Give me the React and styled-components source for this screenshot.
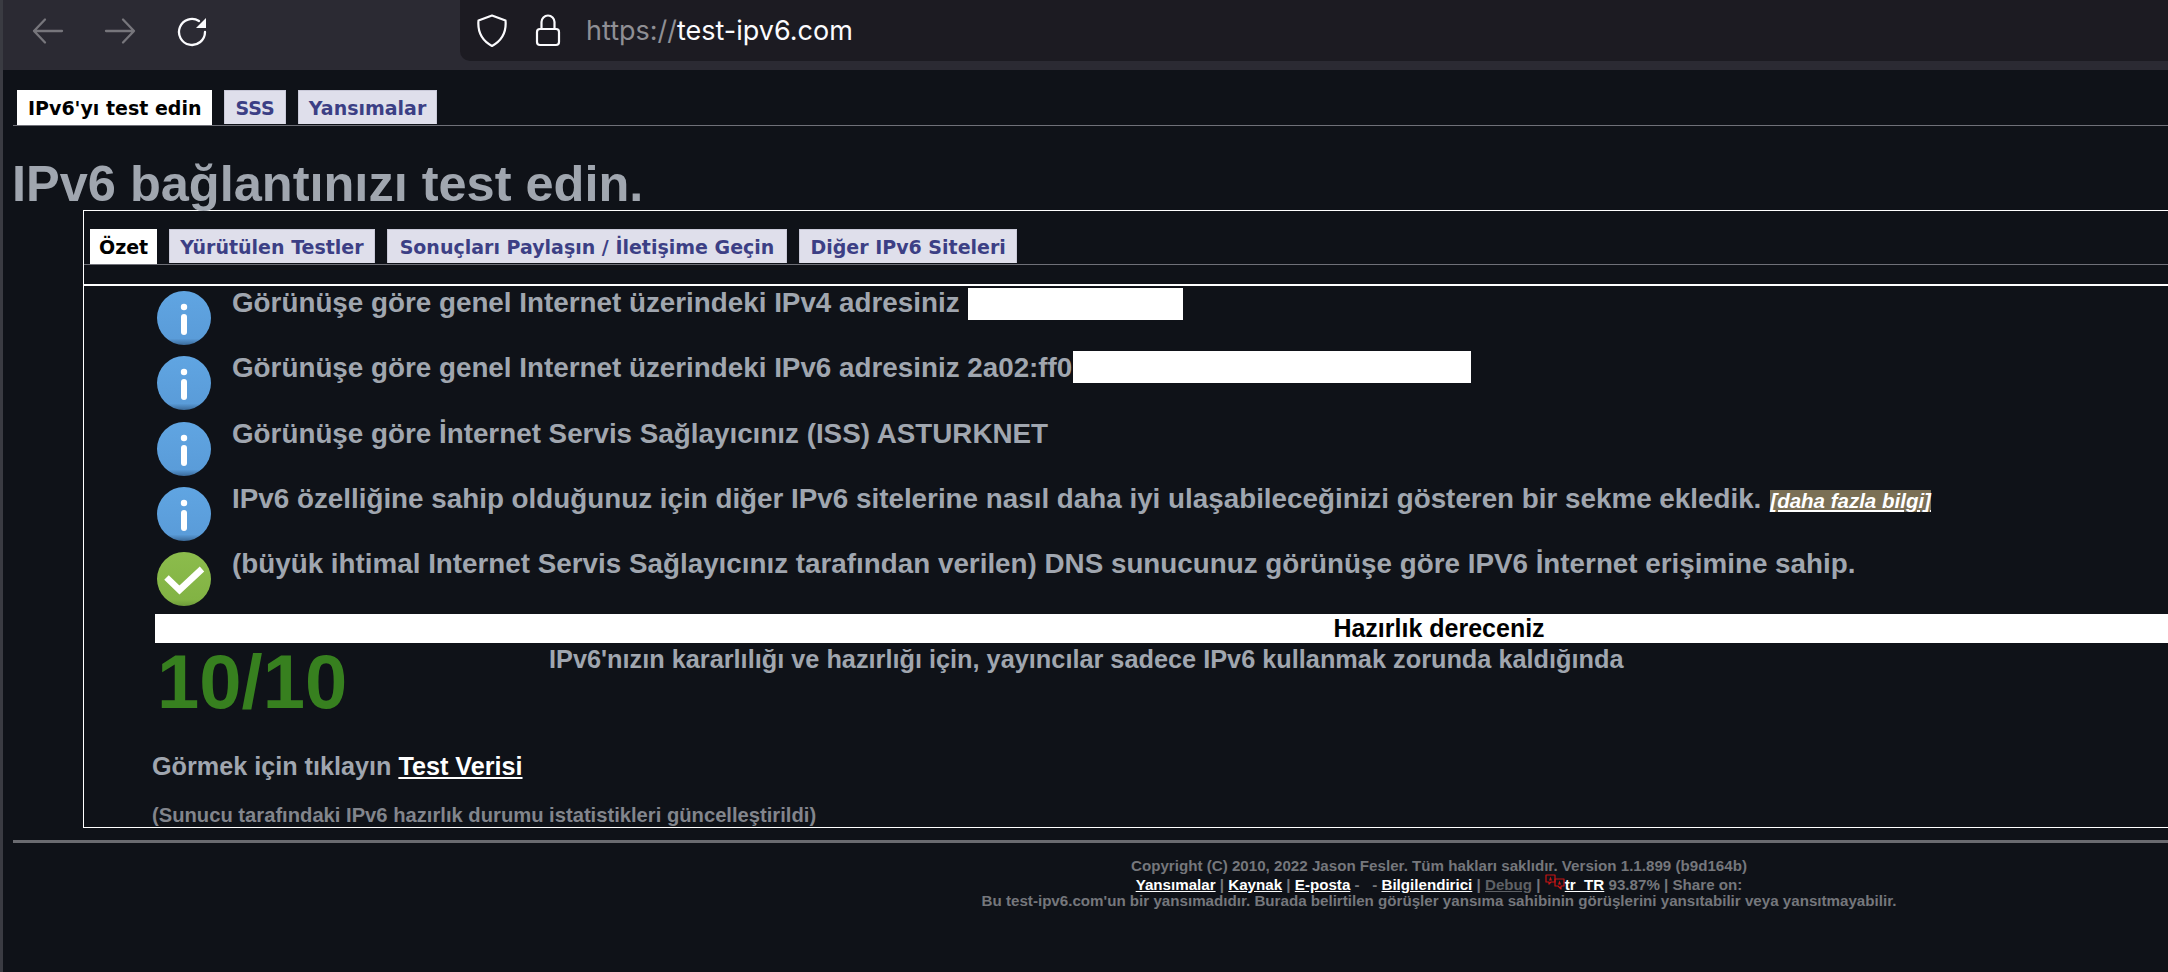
import styled, { createGlobalStyle } from "styled-components";

const GlobalStyle = createGlobalStyle`
  html, body {
    margin: 0;
    padding: 0;
    background: #0f1218;
    overflow: hidden;
  }
`;

const Window = styled.div`
  width: 2168px;
  height: 972px;
  overflow: hidden;
  background: #0f1218;
  border-left: 3px solid #3a3b42;
  box-sizing: border-box;
  font-family: "Liberation Sans", Arial, sans-serif;
  font-weight: 700;
  color: #a0a6af;
`;

const Toolbar = styled.div`
  height: 70px;
  background: #2b2a33;
  display: flex;
  align-items: flex-start;
  padding-left: 29px;
  box-sizing: border-box;
`;

const NavIcon = styled.svg`
  width: 32px;
  height: 32px;
  margin: 15px 40px 0 0;
  flex: none;
  fill: none;
  stroke: ${(props) => (props.$active ? "#fbfbfe" : "#77767c")};
  stroke-width: 2.3;
  stroke-linecap: round;
  stroke-linejoin: round;
`;

const UrlBar = styled.div`
  margin-left: 212px;
  flex: 1;
  height: 61px;
  background: #1c1b22;
  border-bottom-left-radius: 10px;
  display: flex;
  align-items: center;
  padding-left: 17px;
  font-family: "Inter", "Liberation Sans", sans-serif;
  font-weight: 400;
  font-size: 27px;
  color: #fbfbfe;
`;

const UrlIcon = styled.svg`
  width: 34px;
  height: 34px;
  margin-right: 21px;
  flex: none;
  fill: none;
  stroke: #fbfbfe;
  stroke-width: 2.2;
  stroke-linejoin: round;
  stroke-linecap: round;
`;

const Scheme = styled.span`
  color: #8f8f94;
  margin-left: -1px;
`;

const Page = styled.div`
  width: 2862px;
  padding: 20px 0 0 10px;
  box-sizing: border-box;
`;

const TabBar = styled.div`
  display: flex;
  gap: 12px;
  height: 35px;
  padding-left: ${(props) => props.$inset}px;
  border-bottom: 1px solid #6f7078;
  box-sizing: content-box;
`;

const Tab = styled.div`
  height: ${(props) => (props.$active ? "35px" : "34px")};
  box-sizing: border-box;
  padding: 0 ${(props) => props.$pad || 10}px;
  display: flex;
  align-items: center;
  font-family: "DejaVu Sans", Verdana, sans-serif;
  font-size: 19px;
  font-weight: 700;
  white-space: nowrap;
  background: ${(props) => (props.$active ? "#fff" : "#dfdfeb")};
  color: ${(props) => (props.$active ? "#000" : "#3c3f85")};
  border: 1px solid ${(props) => (props.$active ? "#fff" : "#c9c9d8")};
  border-bottom: 0;
`;

const Title = styled.h1`
  margin: 31px 0 0 -1px;
  height: 53px;
  font-size: 50.5px;
  line-height: 53px;
  font-weight: 700;
  color: #a0a6af;
  white-space: nowrap;
`;

const Panel = styled.div`
  margin-left: 70px;
  height: 618px;
  box-sizing: border-box;
  border: 1px solid #fff;
  border-right: 0;
  padding-top: 18px;
`;

const PanelRule = styled.div`
  height: 2px;
  background: #fff;
  margin-top: 19px;
`;

const Results = styled.div`
  padding: 1px 0 0 72px;
`;

const Row = styled.div`
  height: 65.3px;
  display: flex;
  align-items: flex-start;
  font-size: 27.8px;
  line-height: 31px;
  white-space: nowrap;
`;

const RowIcon = styled.svg`
  width: 56px;
  height: 56px;
  flex: none;
  margin: 3px 20px 0 0;
`;

const RowText = styled.div`
  display: flex;
  align-items: flex-start;
`;

const Redacted = styled.span`
  display: inline-block;
  height: 32px;
  background: #fff;
  width: ${(props) => props.$width}px;
  margin-left: ${(props) => props.$gap}px;
  margin-top: ${(props) => props.$top}px;
`;

const MoreInfo = styled.a`
  margin: 7px 0 0 9px;
  font-size: 20.5px;
  line-height: 22px;
  font-style: italic;
  color: #fff;
  background: #7a6f55;
  text-decoration: underline;
`;

const ScoreBar = styled.div`
  margin: 1px 142px 0 71px;
  height: 29px;
  background: #fff;
  color: #000;
  text-align: center;
  font-size: 25px;
  line-height: 29px;
`;

const ScoreRow = styled.div`
  display: flex;
  margin-left: 71px;
  height: 109px;
`;

const ScoreValue = styled.div`
  width: 394px;
  flex: none;
  font-size: 76px;
  line-height: 76px;
  padding: 1px 0 0 2px;
  box-sizing: border-box;
  color: #37801f;
`;

const ScoreNote = styled.div`
  font-size: 25.3px;
  line-height: 33px;
  white-space: nowrap;
`;

const DataLine = styled.div`
  margin-left: 68px;
  font-size: 25.2px;
  line-height: 29px;
`;

const WhiteLink = styled.a`
  color: #fff;
  text-decoration: underline;
`;

const StatsLine = styled.div`
  margin: 22px 0 0 68px;
  font-size: 20.2px;
  line-height: 24px;
  color: #82858c;
`;

const FooterRule = styled.div`
  height: 3px;
  margin-top: 12px;
  background: #6a6b70;
`;

const Footer = styled.div`
  text-align: center;
  font-size: 15.15px;
  line-height: 17px;
  color: #75777c;
  padding-top: 14px;
`;

const FooterLine = styled.div`
  white-space: nowrap;
  margin-top: ${(props) => props.$pull || 0}px;
`;

const FooterLink = styled.a`
  color: ${(props) => (props.$muted ? "#5f6165" : "#fff")};
  text-decoration: underline;
`;

const TranslateIcon = styled.svg`
  width: 20px;
  height: 16px;
  vertical-align: 0;
  fill: none;
  stroke: #c81414;
  stroke-width: 1.2;
  stroke-linejoin: round;
`;

function InfoIcon() {
  return (
    <RowIcon viewBox="0 0 56 56">
      <defs>
        <linearGradient id="infoFill" x1="0" y1="0" x2="0" y2="1">
          <stop offset="0" stopColor="#60a5e2" />
          <stop offset="0.88" stopColor="#5a9cd9" />
          <stop offset="1" stopColor="#3b6a99" />
        </linearGradient>
      </defs>
      <circle cx="28" cy="28" r="27" fill="url(#infoFill)" />
      <circle cx="28" cy="17" r="3.2" fill="#fff" />
      <rect x="25" y="24" width="6" height="21" rx="3" fill="#fff" />
    </RowIcon>
  );
}

function CheckIcon() {
  return (
    <RowIcon viewBox="0 0 56 56">
      <defs>
        <linearGradient id="okFill" x1="0" y1="0" x2="0" y2="1">
          <stop offset="0" stopColor="#8cbc4c" />
          <stop offset="0.88" stopColor="#82b344" />
          <stop offset="1" stopColor="#6c9a3a" />
        </linearGradient>
      </defs>
      <circle cx="28" cy="28" r="27" fill="url(#okFill)" />
      <path
        d="M10.500 26.500l13 12.500L46 18"
        fill="none"
        stroke="#fff"
        strokeWidth="6.5"
      />
    </RowIcon>
  );
}

export default function App() {
  return (
    <Window>
      <GlobalStyle />
      <Toolbar>
        <NavIcon viewBox="0 0 32 32">
          <path d="M30 16H2M13 4.500L2 16l11 11.500" />
        </NavIcon>
        <NavIcon viewBox="0 0 32 32">
          <path d="M2 16h28M19 4.500L30 16 19 27.500" />
        </NavIcon>
        <NavIcon viewBox="0 0 32 32" $active>
          <path d="M29 17a13 13 0 1 1-6-11" />
          <path d="M30 3v10H20z" fill="#fbfbfe" stroke="none" />
        </NavIcon>
        <UrlBar>
          <UrlIcon viewBox="0 0 34 34">
            <path d="M15 1.500L28.500 6.500C29.500 17 26 26 15 32C4 26 .5 17 1.500 6.500z" />
          </UrlIcon>
          <UrlIcon viewBox="0 0 34 34">
            <path d="M9.500 15V8a6.500 6.500 0 0 1 13 0v7" />
            <rect x="5" y="15" width="22" height="16" rx="3" />
          </UrlIcon>
          <Scheme>https://</Scheme>test-ipv6.com
        </UrlBar>
      </Toolbar>
      <Page>
        <TabBar $inset={4}>
          <Tab $active>IPv6'yı test edin</Tab>
          <Tab>SSS</Tab>
          <Tab>Yansımalar</Tab>
        </TabBar>
        <Title>IPv6 bağlantınızı test edin.</Title>
        <Panel>
          <TabBar $inset={6}>
            <Tab $active $pad={8}>Özet</Tab>
            <Tab>Yürütülen Testler</Tab>
            <Tab $pad={12}>Sonuçları Paylaşın / İletişime Geçin</Tab>
            <Tab>Diğer IPv6 Siteleri</Tab>
          </TabBar>
          <PanelRule />
          <Results>
            <Row>
              <InfoIcon />
              <RowText>
                Görünüşe göre genel Internet üzerindeki IPv4 adresiniz
                <Redacted $gap={8} $width={215} $top={1} />
              </RowText>
            </Row>
            <Row>
              <InfoIcon />
              <RowText>
                Görünüşe göre genel Internet üzerindeki IPv6 adresiniz 2a02:ff0
                <Redacted $gap={1} $width={398} $top={-1} />
              </RowText>
            </Row>
            <Row>
              <InfoIcon />
              <RowText>Görünüşe göre İnternet Servis Sağlayıcınız (ISS) ASTURKNET</RowText>
            </Row>
            <Row>
              <InfoIcon />
              <RowText>
                IPv6 özelliğine sahip olduğunuz için diğer IPv6 sitelerine nasıl daha iyi ulaşabileceğinizi gösteren bir sekme ekledik.
                <MoreInfo>[daha fazla bilgi]</MoreInfo>
              </RowText>
            </Row>
            <Row>
              <CheckIcon />
              <RowText>
                (büyük ihtimal Internet Servis Sağlayıcınız tarafından verilen) DNS sunucunuz görünüşe göre IPV6 İnternet erişimine sahip.
              </RowText>
            </Row>
          </Results>
          <ScoreBar>Hazırlık dereceniz</ScoreBar>
          <ScoreRow>
            <ScoreValue>10/10</ScoreValue>
            <ScoreNote>IPv6'nızın kararlılığı ve hazırlığı için, yayıncılar sadece IPv6 kullanmak zorunda kaldığında</ScoreNote>
          </ScoreRow>
          <DataLine>
            Görmek için tıklayın <WhiteLink>Test Verisi</WhiteLink>
          </DataLine>
          <StatsLine>(Sunucu tarafındaki IPv6 hazırlık durumu istatistikleri güncelleştirildi)</StatsLine>
        </Panel>
        <FooterRule />
        <Footer>
          <FooterLine>Copyright (C) 2010, 2022 Jason Fesler. Tüm hakları saklıdır. Version 1.1.899 (b9d164b)</FooterLine>
          <FooterLine>
            <FooterLink>Yansımalar</FooterLink> | <FooterLink>Kaynak</FooterLink> | <FooterLink>E-posta</FooterLink> - &nbsp; - <FooterLink>Bilgilendirici</FooterLink> | <FooterLink $muted>Debug</FooterLink> |{" "}
            <TranslateIcon viewBox="0 0 20 16">
              <path d="M1 1h9v7H6l-2 2V8H1z" />
              <path d="M10 5h9v7h-3v3l-3-3h-3z" />
              <path d="M5.500 2.500l1.500 4h-3zM14.500 6.500l1.500 4h-3z" fill="#c81414" stroke="none" />
            </TranslateIcon>
            <FooterLink>tr_TR</FooterLink> 93.87% | Share on:
          </FooterLine>
          <FooterLine $pull={-1}>Bu test-ipv6.com'un bir yansımadıdır. Burada belirtilen görüşler yansıma sahibinin görüşlerini yansıtabilir veya yansıtmayabilir.</FooterLine>
        </Footer>
      </Page>
    </Window>
  );
}
